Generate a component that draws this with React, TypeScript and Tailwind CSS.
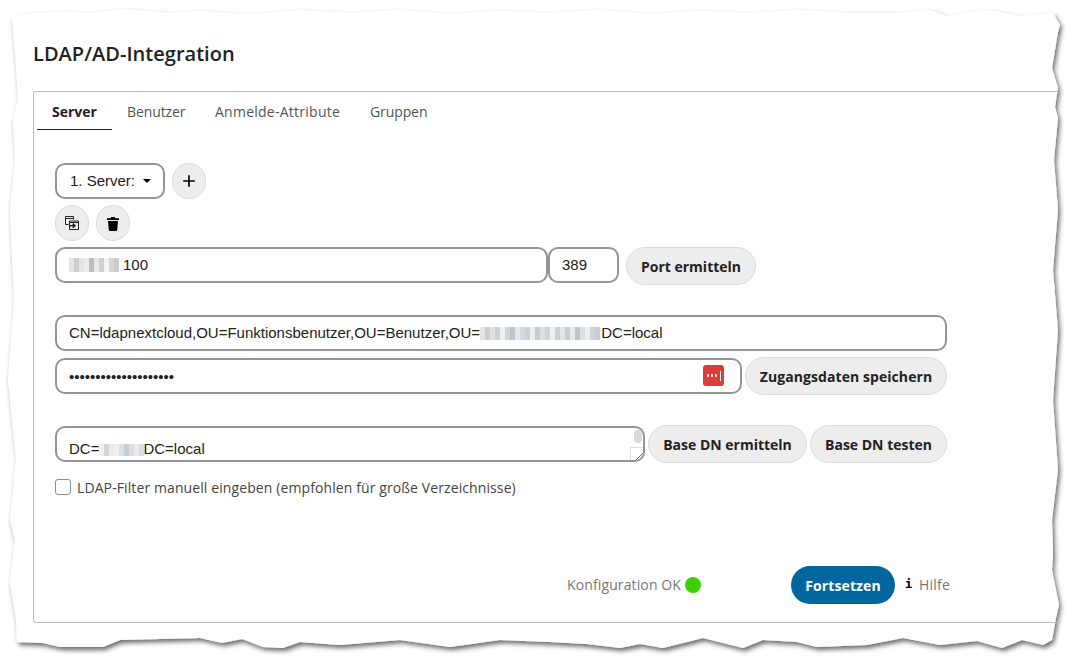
import React from "react";
import { Plus } from "lucide-react";

const outline =
  "12,17 33,13 60,12 90,13 125,9 170,13 200,11 240,14 270,13 300,10 350,13 400,10 450,14 500,11 550,13 600,10 650,14 700,11 750,13 800,10 850,13 900,13 930,10 947,16 985,10 1000,12 1020,16 1053,13 1060,25 1058,32 1052,68 1058,88 1055,107 1058,118 1054,160 1058,210 1053,270 1058,330 1053,400 1058,470 1052,520 1053,555 1052,570 1059,605 1056,618 1052,640 1043,645 1022,640 1002,648 977,641 940,645 903,638 867,645 817,647 797,642 763,640 743,648 703,638 663,648 640,644 620,648 587,644 550,642 500,640 450,647 400,640 340,645 300,642 283,648 263,647 242,639 222,643 200,638 120,640 103,647 60,647 43,643 17,642 16,620 10,583 15,540 10,520 16,460 8,380 14,300 10,210 15,160 13,120 18,100 16,67";

function Blur({ cells, h = 14 }: { cells: string[]; h?: number }) {
  return (
    <span className="inline-flex align-middle blur-[0.7px]" style={{ height: h }}>
      {cells.map((c, i) => (
        <span key={i} className="w-[5px] h-full" style={{ background: c }} />
      ))}
    </span>
  );
}

const inputBox =
  "h-[36px] border-2 border-[#949494] rounded-[10px] bg-white flex items-center pl-[12px] text-[15px] text-[#222222] font-['Liberation_Sans',Arial,sans-serif] whitespace-nowrap overflow-hidden";
const pill =
  "rounded-full bg-[#ededed] border border-[#dbdbdb] text-[#222222] font-['Open_Sans',sans-serif] font-bold text-[14px] flex items-center justify-center whitespace-nowrap";
const circle =
  "w-[34px] h-[36px] rounded-full bg-[#ededed] border border-[#dbdbdb] flex items-center justify-center text-black";

export default function App() {
  return (
    <div className="relative w-[1073px] h-[660px] bg-white overflow-hidden font-['Open_Sans',sans-serif]">
      <svg className="absolute inset-0" width="1073" height="660" aria-hidden="true">
        <defs>
          <filter id="torn" x="-5%" y="-5%" width="110%" height="110%">
            <feDropShadow dx="2" dy="3" stdDeviation="2.5" floodColor="#000000" floodOpacity="0.6" />
          </filter>
        </defs>
        <polygon points={outline} fill="#ffffff" filter="url(#torn)" />
      </svg>

      <div className="relative pl-[33px] pt-[40px] w-[1058px]">
        <h1 className="h-[28px] leading-[28px] text-[20px] font-semibold text-[#222222] tracking-[0.03px]">
          LDAP/AD-Integration
        </h1>

        <div className="mt-[23px] h-[532px] border border-r-0 border-[#bcbcbc] rounded-l-[3px] flex flex-col">
          <div className="flex pl-[3px] h-[38px] text-[14px] text-[#555555]">
            <div className="w-[75px] border-b border-[#222222] flex items-center justify-center font-bold text-[#222222] pt-[1px]">
              Server
            </div>
            <div className="ml-[15px] w-[59px] flex items-center whitespace-nowrap tracking-[-0.1px] pt-[1px]">Benutzer</div>
            <div className="ml-[29px] w-[125px] flex items-center whitespace-nowrap tracking-[0.25px] pt-[1px]">Anmelde-Attribute</div>
            <div className="ml-[30px] flex items-center whitespace-nowrap tracking-[-0.1px] pt-[1px]">Gruppen</div>
          </div>

          <div className="pl-[21px] pt-[33px] w-[960px]">
            <div className="flex gap-[7px] h-[36px]">
              <div className="w-[110px] h-[36px] border-2 border-[#949494] rounded-[10px] flex items-center pl-[13px] gap-[8px] text-[15px] text-[#222222] font-['Liberation_Sans',Arial,sans-serif]">
                <span>1. Server:</span>
                <span className="w-0 h-0 border-x-[4px] border-x-transparent border-t-[4px] border-t-black" />
              </div>
              <div className={circle}>
                <Plus size={18} strokeWidth={2.2} />
              </div>
            </div>

            <div className="flex gap-[7px] mt-[6px]">
              <div className={circle}>
                <svg width="14" height="14" viewBox="0 0 14 14" fill="none" stroke="#222222" strokeWidth="1">
                  <path d="M8.5 3.5V.5H.5v8h3" />
                  <path d="M4.5 5h9v8.5h-9z" />
                  <path d="M1 2.5h7M5 6.5h8" />
                  <path d="M4 9.7H9.5M7.8 7.6l2.2 2.1-2.2 2.1" strokeWidth="1.5" />
                </svg>
              </div>
              <div className={circle}>
                <svg width="14" height="15" viewBox="0 0 14 15" fill="#000000">
                  <path d="M1 2.2h3.6L5.2 1h3.6l.6 1.2H13v1.8H1z" />
                  <path d="M2 5h10l-.8 9a1 1 0 0 1-1 1H3.800a1 1 0 0 1-1-1z" />
                </svg>
              </div>
            </div>

            <div className="flex mt-[6px] items-start">
              <div className={`${inputBox} w-[493px]`}>
                <Blur cells={["#e4e4e4", "#cfcfcf", "#e4e4e4", "#ececec", "#bdbdbd", "#e8e8e8", "#d0d0d0", "#f2f2f2", "#d5d5d5", "#cccccc"]} />
                <span className="ml-[4px]">100</span>
              </div>
              <div className={`${inputBox} w-[71px]`}>389</div>
              <button className={`${pill} w-[130px] h-[38px] ml-[7px]`}>Port ermitteln</button>
            </div>

            <div className={`${inputBox} w-[892px] mt-[30px]`}>
              CN=ldapnextcloud,OU=Funktionsbenutzer,OU=Benutzer,OU=
              <Blur cells={["#e2e6ea", "#c9ced3", "#dfe2e5", "#ccd1d6", "#eef0f2", "#d0d4d8", "#bfc4c9", "#e6e8ea", "#d6dade", "#cdd1d5", "#eceeef", "#c8ccd0", "#dde0e3", "#d2d5d8", "#eef0f2", "#ccd1d6", "#e2e6ea", "#c9ced3", "#e6e8ea", "#bfc4c9", "#dde0e3", "#eceeef", "#d0d4d8", "#c8ccd0"]} h={13} />
              <span className="-ml-[3px]">,DC=local</span>
            </div>

            <div className="flex mt-[7px] items-start">
              <div className={`${inputBox} w-[687px] relative`}>
                <span className="leading-none">••••••••••••••••••••</span>
                <span className="absolute left-[646px] top-[5px] w-[21px] h-[21px] rounded-[3px] bg-[#dd3d3a] flex items-center justify-center gap-[1.5px]">
                  <span className="w-[2.5px] h-[2.5px] rounded-full bg-white" />
                  <span className="w-[2.5px] h-[2.5px] rounded-full bg-white" />
                  <span className="w-[2.5px] h-[2.5px] rounded-full bg-white" />
                  <span className="w-px h-[10px] bg-white ml-[1px]" />
                </span>
              </div>
              <button className={`${pill} w-[202px] h-[38px] ml-[3px] -mt-[1px] tracking-[0.07px]`}>Zugangsdaten speichern</button>
            </div>

            <div className="flex mt-[31px] items-start">
              <div className={`${inputBox} w-[590px] relative items-end pb-[2px]`}>
                <span className="leading-[18px]">
                  DC=
                  <Blur cells={["#f0f0f0", "#d4d4d4", "#ebebeb", "#f0f0f0", "#dde1e6", "#c8cdd3", "#d9dde1", "#e8eaec", "#d9dde1"]} h={12} />
                  <span className="-ml-[1px]">DC=local</span>
                </span>
                <span className="absolute right-[1px] top-[2px] w-[8px] h-[13px] rounded-[4px] bg-[#d9d9d9]" />
                <span className="absolute right-0 bottom-0 w-[13px] h-[13px] border-l border-t border-[#dddddd] bg-white overflow-hidden">
                  <svg width="13" height="13" viewBox="0 0 13 13" stroke="#666666" strokeWidth="1">
                    <path d="M5 12l7-7M9 12l3-3" />
                  </svg>
                </span>
              </div>
              <button className={`${pill} w-[159px] h-[38px] ml-[3px] -mt-[1px]`}>Base DN ermitteln</button>
              <button className={`${pill} w-[137px] h-[38px] ml-[3px] -mt-[1px]`}>Base DN testen</button>
            </div>

            <div className="flex items-center mt-[15px] h-[18px]">
              <span className="w-[16px] h-[16px] border border-[#8f8f8f] rounded-[3px] bg-white" />
              <span className="ml-[6px] text-[14px] text-[#444444] tracking-[0.1px]">
                LDAP-Filter manuell eingeben (empfohlen für große Verzeichnisse)
              </span>
            </div>

            <div className="flex items-center mt-[70px] h-[38px] text-[14px] text-[#777777]">
              <span className="ml-[512px] w-[114px] -mt-[2px] whitespace-nowrap tracking-[0.12px]">Konfiguration OK</span>
              <span className="ml-[4px] w-[16px] h-[16px] rounded-full bg-[#3fcf00]" />
              <button className="ml-[90px] w-[104px] h-[38px] rounded-full bg-[#00679e] text-white font-bold tracking-[0.1px]">
                Fortsetzen
              </button>
              <span className="ml-[10px] w-[14px] -mt-[2px] font-['DejaVu_Sans_Mono',monospace] font-bold text-[12px] text-black">i</span>
              <span className="-mt-[2px] tracking-[0.2px]">Hilfe</span>
            </div>
          </div>
        </div>
      </div>
    </div>
  );
}
